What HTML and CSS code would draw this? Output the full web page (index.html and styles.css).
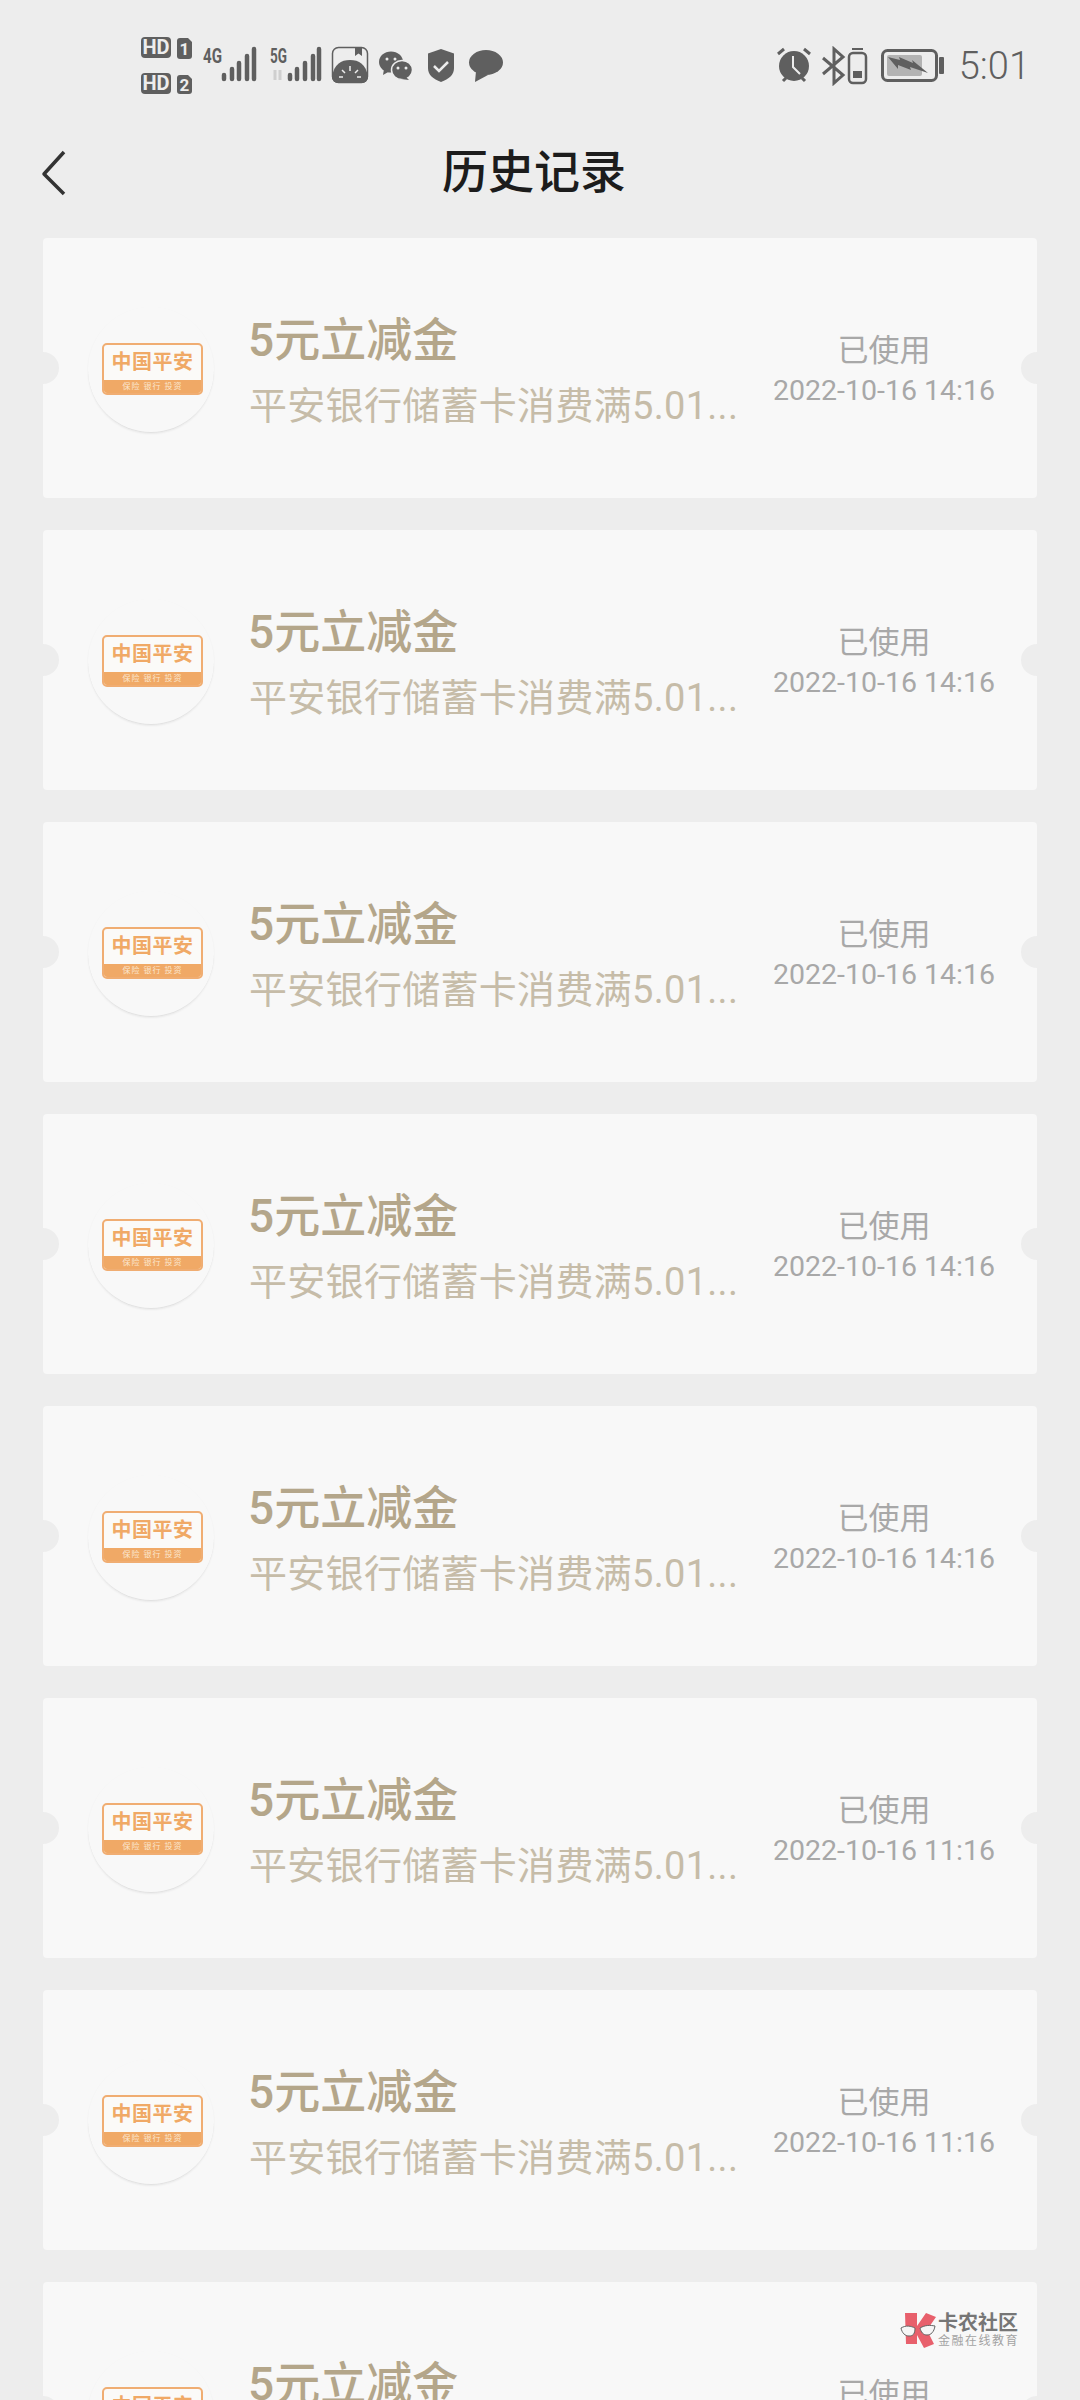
FILE: index.html
```html
<!DOCTYPE html>
<html lang="zh-CN">
<head>
  <meta charset="UTF-8">
  <title>历史记录</title>
  <link rel="stylesheet" href="styles.css">
</head>
<body>
  <div class="status-bar">
    <svg class="status-left" width="362" height="57" viewBox="0 0 362 57">
      <!-- sim -->
      <rect x="0" y="0" width="30" height="21" rx="4" fill="#5f5f5f"/>
      <text x="15" y="17" class="hd">HD</text>
      <path d="M36 4a3 3 0 0 1 3-3h8l4 4v14a3 3 0 0 1-3 3H39a3 3 0 0 1-3-3z" fill="#5f5f5f"/>
      <text x="43.500" y="17.500" class="hd hd-num">1</text>
      <rect x="0" y="36" width="30" height="21" rx="4" fill="#5f5f5f"/>
      <text x="15" y="53" class="hd">HD</text>
      <path d="M36 41a3 3 0 0 1 3-3h8l4 4v12a3 3 0 0 1-3 3H39a3 3 0 0 1-3-3z" fill="#5f5f5f"/>
      <text x="43.500" y="53.500" class="hd hd-num">2</text>
      <!-- 4g -->
      <text x="62" y="26" class="net" textLength="19" lengthAdjust="spacingAndGlyphs">4G</text>
      <path d="M83 38v4M91 32v10M98 26v16M106 19v23M113 12v30" stroke="#5f5f5f" stroke-width="4.500" stroke-linecap="round"/>
      <!-- 5g -->
      <text x="129" y="26" class="net" textLength="17" lengthAdjust="spacingAndGlyphs">5G</text>
      <path d="M134 33v10M139 33v10" stroke="#cfcfcf" stroke-width="3"/>
      <path d="M149 38v4M156 32v10M164 26v16M172 19v23M178 12v30" stroke="#5f5f5f" stroke-width="4.500" stroke-linecap="round"/>
      <!-- photo app -->
      <rect x="191.500" y="10.500" width="35" height="35" rx="6" fill="none" stroke="#5f5f5f" stroke-width="1.500"/>
      <path d="M191 40c2-13 9-17 18-17s16 4 18 17a6 6 0 0 1-6 6h-24a6 6 0 0 1-6-6z" fill="#5f5f5f"/>
      <path d="M214 10h7v9l-3.500-2.500L214 19z" fill="#5f5f5f"/>
      <path d="M209 29v5M201 33l3 3M217 33l-3 3M198 40h4M216 40h4" stroke="#ededed" stroke-width="1.500"/>
      <!-- wechat -->
      <ellipse cx="250" cy="25" rx="12" ry="10.500" fill="#5f5f5f"/>
      <path d="M243 32l-1 6 7-4z" fill="#5f5f5f"/>
      <ellipse cx="261" cy="33" rx="10.500" ry="9.500" fill="#5f5f5f" stroke="#ededed" stroke-width="1.500"/>
      <path d="M265 40l3 3-8-1z" fill="#5f5f5f"/>
      <circle cx="246" cy="22" r="1.500" fill="#ededed"/><circle cx="254" cy="22" r="1.500" fill="#ededed"/>
      <circle cx="257" cy="31" r="1.500" fill="#ededed"/><circle cx="265" cy="31" r="1.500" fill="#ededed"/>
      <!-- shield -->
      <path d="M300 12l13 4.500V31c0 7-5 11-13 14-8-3-13-7-13-14V16.500z" fill="#5f5f5f"/>
      <path d="M293 29l5 5 9-9" fill="none" stroke="#ededed" stroke-width="2.500"/>
      <!-- bubble -->
      <ellipse cx="345" cy="25.500" rx="17" ry="12.500" fill="#5f5f5f"/>
      <path d="M335 34l-1 11 13-7z" fill="#5f5f5f"/>
    </svg>
    <div class="status-right">
      <svg class="status-icons" width="170" height="40" viewBox="0 0 170 40">
        <!-- alarm -->
        <circle cx="18" cy="20" r="15" fill="#5f5f5f"/>
        <path d="M2 8l6-5M34 8l-6-5M7 35l3-3M29 35l-3-3" stroke="#5f5f5f" stroke-width="3"/>
        <path d="M17 10v11l7 7" fill="none" stroke="#ededed" stroke-width="2"/>
        <!-- bluetooth -->
        <path d="M47 12l20 17-9 8V3l9 8-20 17" fill="none" stroke="#5f5f5f" stroke-width="3"/>
        <!-- small battery -->
        <rect x="73" y="7" width="17" height="30" rx="4" fill="none" stroke="#5f5f5f" stroke-width="2.500"/>
        <path d="M76 3h11" stroke="#5f5f5f" stroke-width="2"/>
        <rect x="77" y="25" width="9" height="7" fill="#5f5f5f"/>
        <!-- battery -->
        <rect x="106.500" y="4.500" width="54" height="30" rx="5" fill="none" stroke="#5f5f5f" stroke-width="3"/>
        <rect x="111" y="9" width="35" height="21" rx="2" fill="#b3b3b3"/>
        <path d="M112 11l12 3-1-3 14 6-1-3 16 13-18-6 1 3-13-5v4z" fill="#5f5f5f"/>
        <rect x="163" y="11" width="5" height="17" rx="1" fill="#5f5f5f"/>
      </svg>
      <span class="clock">5:01</span>
    </div>
  </div>

  <header class="title-bar">
    <svg class="back" width="28" height="46" viewBox="0 0 28 46">
      <path d="M24 2L4 24l20 20" fill="none" stroke="#333" stroke-width="3.500" stroke-linejoin="round"/>
    </svg>
    <h1>历史记录</h1>
  </header>

  <div class="list">
    <div class="card">
      <div class="logo"><div class="logo-box"><div class="logo-name">中国平安</div><div class="logo-sub">保险 银行 投资</div></div></div>
      <div class="info"><div class="name">5元立减金</div><div class="desc">平安银行储蓄卡消费满5.01...</div></div>
      <div class="state"><div class="used">已使用</div><div class="time">2022-10-16 14:16</div></div>
    </div>
    <div class="card">
      <div class="logo"><div class="logo-box"><div class="logo-name">中国平安</div><div class="logo-sub">保险 银行 投资</div></div></div>
      <div class="info"><div class="name">5元立减金</div><div class="desc">平安银行储蓄卡消费满5.01...</div></div>
      <div class="state"><div class="used">已使用</div><div class="time">2022-10-16 14:16</div></div>
    </div>
    <div class="card">
      <div class="logo"><div class="logo-box"><div class="logo-name">中国平安</div><div class="logo-sub">保险 银行 投资</div></div></div>
      <div class="info"><div class="name">5元立减金</div><div class="desc">平安银行储蓄卡消费满5.01...</div></div>
      <div class="state"><div class="used">已使用</div><div class="time">2022-10-16 14:16</div></div>
    </div>
    <div class="card">
      <div class="logo"><div class="logo-box"><div class="logo-name">中国平安</div><div class="logo-sub">保险 银行 投资</div></div></div>
      <div class="info"><div class="name">5元立减金</div><div class="desc">平安银行储蓄卡消费满5.01...</div></div>
      <div class="state"><div class="used">已使用</div><div class="time">2022-10-16 14:16</div></div>
    </div>
    <div class="card">
      <div class="logo"><div class="logo-box"><div class="logo-name">中国平安</div><div class="logo-sub">保险 银行 投资</div></div></div>
      <div class="info"><div class="name">5元立减金</div><div class="desc">平安银行储蓄卡消费满5.01...</div></div>
      <div class="state"><div class="used">已使用</div><div class="time">2022-10-16 14:16</div></div>
    </div>
    <div class="card">
      <div class="logo"><div class="logo-box"><div class="logo-name">中国平安</div><div class="logo-sub">保险 银行 投资</div></div></div>
      <div class="info"><div class="name">5元立减金</div><div class="desc">平安银行储蓄卡消费满5.01...</div></div>
      <div class="state"><div class="used">已使用</div><div class="time">2022-10-16 11:16</div></div>
    </div>
    <div class="card">
      <div class="logo"><div class="logo-box"><div class="logo-name">中国平安</div><div class="logo-sub">保险 银行 投资</div></div></div>
      <div class="info"><div class="name">5元立减金</div><div class="desc">平安银行储蓄卡消费满5.01...</div></div>
      <div class="state"><div class="used">已使用</div><div class="time">2022-10-16 11:16</div></div>
    </div>
    <div class="card">
      <div class="logo"><div class="logo-box"><div class="logo-name">中国平安</div><div class="logo-sub">保险 银行 投资</div></div></div>
      <div class="info"><div class="name">5元立减金</div><div class="desc">平安银行储蓄卡消费满5.01...</div></div>
      <div class="state"><div class="used">已使用</div><div class="time">2022-10-16 11:16</div></div>
    </div>
  </div>

  <div class="watermark">
    <svg width="36" height="36" viewBox="0 0 36 36">
      <path d="M5 1h12v13l9-13 10 4-9 13 7 14-10 4-7-13v9H6z" fill="#e8606c"/>
      <path d="M1 16c5-3 10-2 14 0 0 6-2 8-6 8s-7-3-8-8zM20 16c5-3 10-3 15-2-1 6-4 9-8 9s-6-3-7-7z" fill="#f6f6f6" stroke="#666" stroke-width="1"/>
    </svg>
    <div class="wm-text">
      <div class="wm-name">卡农社区</div>
      <div class="wm-sub">金融在线教育</div>
    </div>
  </div>
</body>
</html>
```

FILE: styles.css
```css
* {
  box-sizing: border-box;
  font-family: "Roboto", "Noto Sans CJK SC", sans-serif;
}

html, body {
  height: 2400px;
  margin: 0;
  overflow: hidden;
}

body {
  position: relative;
  background-color: #ededed;
}

/* status bar */
.status-bar {
  height: 106px;
  padding: 37px 50px 0 141px;
  display: flex;
  justify-content: space-between;
  align-items: flex-start;
}

.status-left {
  display: block;
}

.hd {
  font-size: 20px;
  font-weight: 700;
  fill: #ededed;
  text-anchor: middle;
}

.hd-num {
  font-size: 17px;
}

.net {
  font-size: 20px;
  font-weight: 700;
  fill: #5f5f5f;
}

.status-right {
  display: flex;
  align-items: center;
  gap: 13px;
  margin-top: 9px;
}

.status-icons {
  display: block;
}

.clock {
  font-size: 38px;
  font-weight: 300;
  line-height: 40px;
  color: #5f5f5f;
}

/* title */
.title-bar {
  position: relative;
  height: 132px;
  padding-right: 12px;
  display: flex;
  justify-content: center;
  align-items: center;
}

.back {
  position: absolute;
  left: 40px;
  top: 44px;
}

h1 {
  margin: 0;
  font-size: 46px;
  font-weight: 500;
  line-height: 60px;
  color: #1c1c1c;
}

/* list */
.list {
  padding: 0 43px;
  display: flex;
  flex-direction: column;
  gap: 32px;
}

.card {
  position: relative;
  flex: none;
  height: 260px;
  padding: 0 9px 0 45px;
  display: flex;
  align-items: center;
  border-radius: 4px;
  background-color: #f8f8f8;
  overflow: hidden;
}

.card::before,
.card::after {
  content: "";
  position: absolute;
  top: 114px;
  width: 32px;
  height: 32px;
  border-radius: 50%;
  background-color: #ededed;
}

.card::before {
  left: -16px;
}

.card::after {
  right: -16px;
}

.logo {
  flex: none;
  width: 126px;
  height: 126px;
  margin-top: 4px;
  padding: 36px 11px 0 14px;
  border-radius: 50%;
  border-bottom: 1px solid #e2e2e2;
  box-shadow: 0 1px 2px rgba(0, 0, 0, 0.06);
}

.logo-box {
  height: 52px;
  border: 2px solid #f0ad72;
  border-radius: 5px;
  overflow: hidden;
  background-color: #fbfaf8;
}

.logo-name {
  height: 35px;
  font-size: 20px;
  font-weight: 700;
  line-height: 35px;
  letter-spacing: 0.500px;
  text-align: center;
  color: #f0a966;
}

.logo-sub {
  height: 13px;
  font-size: 8px;
  line-height: 13px;
  letter-spacing: 1px;
  text-align: center;
  color: #fbe6d0;
  background-color: #f0a966;
}

.info {
  flex: none;
  width: 491px;
  margin-left: 35px;
  margin-top: 6px;
}

.name {
  margin-top: -1px;
  margin-left: -1px;
  font-size: 46px;
  font-weight: 500;
  line-height: 60px;
  color: #b4a68a;
}

.desc {
  margin-top: 11px;
  font-size: 38px;
  line-height: 50px;
  letter-spacing: 0.300px;
  color: #c6bca8;
  white-space: nowrap;
}

.state {
  flex: 1;
  margin-top: 4px;
  text-align: center;
  color: #a8a8a8;
}

.used {
  font-size: 31px;
  line-height: 42px;
}

.time {
  font-size: 28.500px;
  line-height: 38px;
  white-space: nowrap;
}

/* watermark */
.watermark {
  position: absolute;
  left: 900px;
  top: 2312px;
  display: flex;
  align-items: center;
  gap: 2px;
}

.wm-name {
  font-size: 20px;
  font-weight: 700;
  line-height: 22px;
  color: #767676;
}

.wm-sub {
  font-size: 12px;
  line-height: 14px;
  letter-spacing: 1.500px;
  color: #a3a3a3;
}
```
